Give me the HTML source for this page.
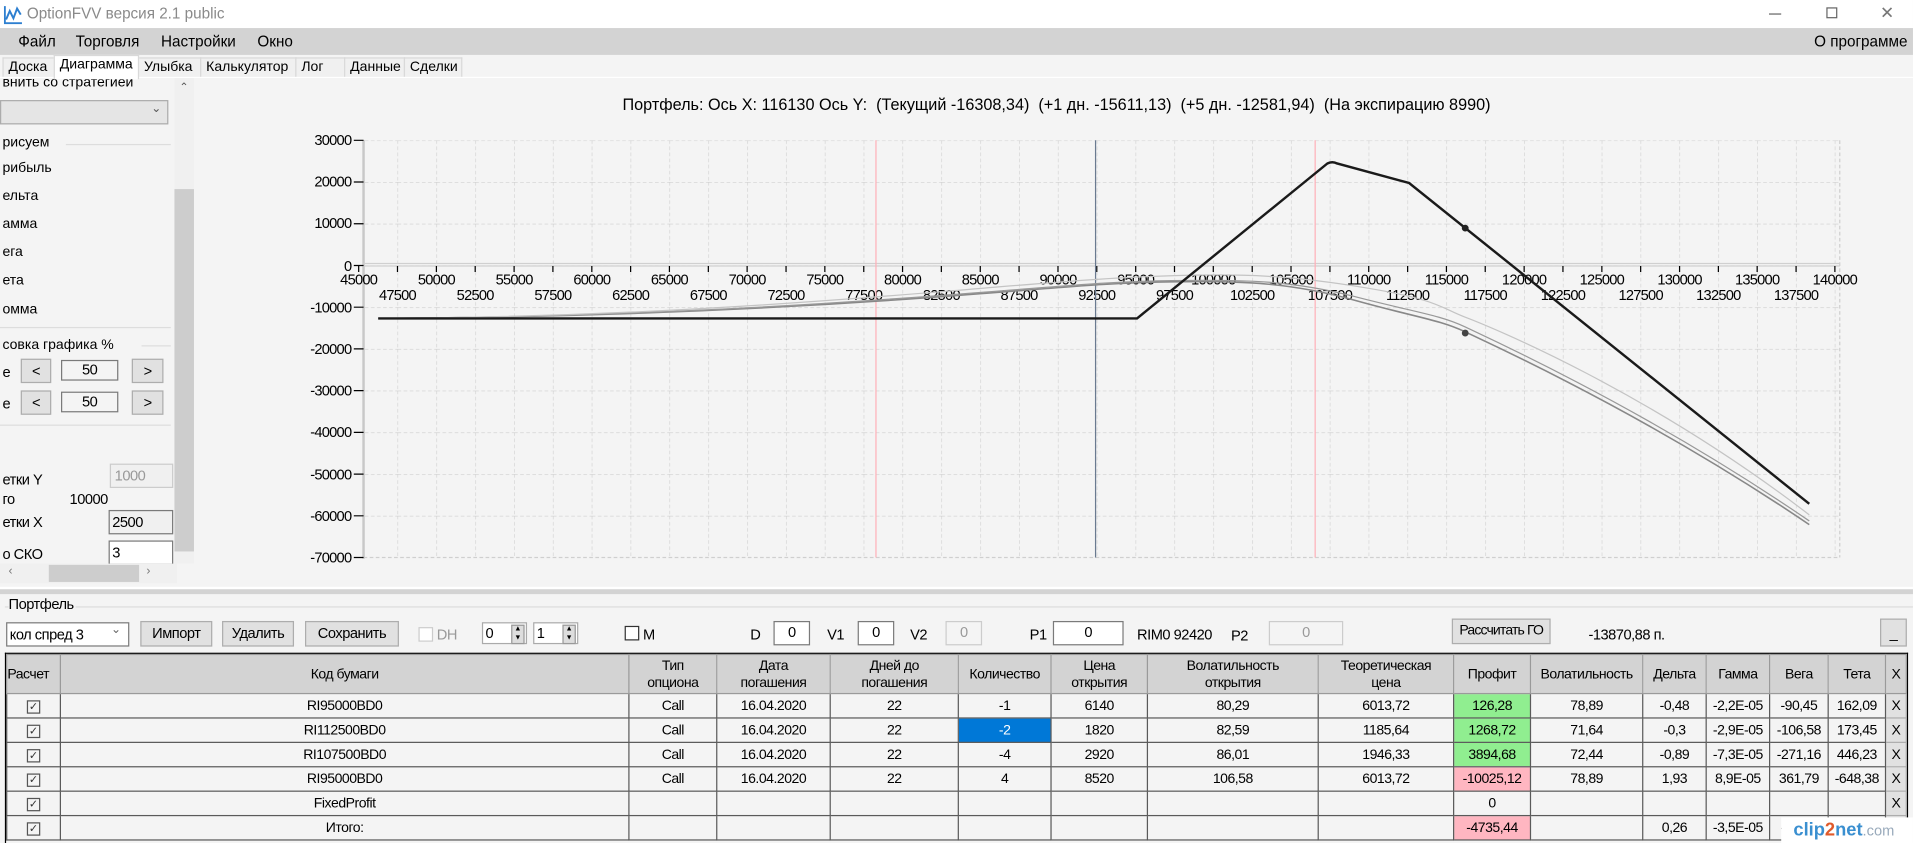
<!DOCTYPE html>
<html><head><meta charset="utf-8">
<style>
html,body{margin:0;padding:0;width:1913px;height:843px;overflow:hidden;background:#f4f4f4;}
#w{position:absolute;left:0;top:0;width:1568px;height:691px;transform:scale(1.22);transform-origin:0 0;background:#f4f4f4;font-family:"Liberation Sans",sans-serif;font-size:12px;color:#000;}
.a{position:absolute;white-space:nowrap;}
.n{letter-spacing:-0.4px;}
.btn{position:absolute;background:#e1e1e1;border:1px solid #adadad;box-sizing:border-box;text-align:center;letter-spacing:-0.4px;white-space:nowrap;overflow:hidden;}
.tb{position:absolute;background:#fff;border:1px solid #7a7a7a;box-sizing:border-box;text-align:center;letter-spacing:-0.4px;}
.tab{position:absolute;top:47px;height:16px;border:1px solid #d9d9d9;border-bottom:none;box-sizing:border-box;background:#f0f0f0;padding-left:4px;line-height:15px;font-size:11.5px;}
table{border-collapse:collapse;position:absolute;left:5px;top:536px;font-size:11.5px;letter-spacing:-0.4px;table-layout:fixed;}
td{border:1px solid #5a5a5a;text-align:center;padding:0;height:19px;background:#f4f4f4;overflow:hidden;white-space:nowrap;}
tr.h td{background:#d3d3d3;height:31px;line-height:14px;border-color:#9a9a9a;}
.g{background:#90ee90!important}.p{background:#ffb6c1!important}
.cb{display:inline-block;width:9px;height:9px;border:1px solid #555;font-size:9px;line-height:9px;color:#333;letter-spacing:0;}
.x{background:#e1e1e1!important;border:1px solid #adadad!important;}
</style></head><body><div id="w">
<div class="a" style="left:0;top:0;width:1568px;height:23px;background:#fff"></div>
<svg class="a" style="left:3px;top:4px" width="16" height="16" viewBox="0 0 16 16"><path d="M1 1V15H15" stroke="#2d7fd0" stroke-width="1.5" fill="none"/><path d="M2 12L5 5L8 11L11 3L14 8" stroke="#2d7fd0" stroke-width="1.6" fill="none"/></svg>
<div class="a" style="left:22px;top:4px;font-size:12.5px;color:#8a8a8a">OptionFVV версия 2.1 public</div>
<div class="a" style="left:1450px;top:11px;width:10px;height:1px;background:#666"></div>
<div class="a" style="left:1497px;top:6px;width:7px;height:7px;border:1px solid #666"></div>
<div class="a" style="left:1541px;top:2px;font-size:14px;color:#777">✕</div>
<div class="a" style="left:0;top:23px;width:1568px;height:22px;background:#d3d3d3"></div>
<div class="a" style="left:15px;top:27px;font-size:12.5px">Файл</div>
<div class="a" style="left:62px;top:27px;font-size:12.5px">Торговля</div>
<div class="a" style="left:132px;top:27px;font-size:12.5px">Настройки</div>
<div class="a" style="left:211px;top:27px;font-size:12.5px">Окно</div>
<div class="a" style="left:1487px;top:27px;font-size:12.5px">О программе</div>
<div class="tab" style="left:2px;width:43px">Доска</div>
<div class="tab" style="left:44px;top:45px;height:20px;width:70px;background:#fff;z-index:2">Диаграмма</div>
<div class="tab" style="left:113px;width:52px">Улыбка</div>
<div class="tab" style="left:164px;width:79px">Калькулятор</div>
<div class="tab" style="left:242px;width:41px">Лог</div>
<div class="tab" style="left:282px;width:50px">Данные</div>
<div class="tab" style="left:331px;width:48px">Сделки</div>
<div class="a" style="left:0;top:63px;width:1568px;height:1px;background:#fff"></div>
<div class="a" style="left:0;top:64px;width:143px;height:398px;background:#f4f4f4"></div>
<div class="a" style="left:2px;top:62px;font-size:11.5px">внить со стратегией</div>
<div class="a" style="left:0;top:82px;width:138px;height:20px;background:#e5e5e5;border:1px solid #acacac;box-sizing:border-box"></div>
<div class="a" style="left:124px;top:84px;font-size:10px;color:#555">⌄</div>
<div class="a" style="left:2px;top:111px;font-size:11.5px">рисуем</div>
<div class="a" style="left:54px;top:118px;width:86px;height:1px;background:#ddd"></div>
<div class="a" style="left:2px;top:132px;font-size:11.5px">рибыль</div>
<div class="a" style="left:2px;top:155px;font-size:11.5px">ельта</div>
<div class="a" style="left:2px;top:178px;font-size:11.5px">амма</div>
<div class="a" style="left:2px;top:201px;font-size:11.5px">ега</div>
<div class="a" style="left:2px;top:224px;font-size:11.5px">ета</div>
<div class="a" style="left:2px;top:248px;font-size:11.5px">омма</div>
<div class="a" style="left:0;top:268px;width:140px;height:1px;background:#ddd"></div>
<div class="a" style="left:2px;top:277px;font-size:11.5px">совка графика %</div>
<div class="a" style="left:116px;top:283px;width:24px;height:1px;background:#ddd"></div>
<div class="a n" style="left:2px;top:298px">е</div>
<div class="btn" style="left:17px;top:294px;width:25px;height:20px;line-height:18px">&lt;</div>
<div class="tb" style="left:50px;top:295px;width:47px;height:17px;line-height:15px;background:#f4f4f4">50</div>
<div class="btn" style="left:108px;top:294px;width:26px;height:20px;line-height:18px">&gt;</div>
<div class="a n" style="left:2px;top:324px">е</div>
<div class="btn" style="left:17px;top:320px;width:25px;height:20px;line-height:18px">&lt;</div>
<div class="tb" style="left:50px;top:321px;width:47px;height:17px;line-height:15px;background:#f4f4f4">50</div>
<div class="btn" style="left:108px;top:320px;width:26px;height:20px;line-height:18px">&gt;</div>
<div class="a" style="left:0;top:348px;width:140px;height:1px;background:#ddd"></div>
<div class="a n" style="left:2px;top:386px">етки Y</div>
<div class="tb" style="left:90px;top:380px;width:52px;height:20px;line-height:18px;text-align:left;padding-left:3px;color:#999;border-color:#ccc;background:#f0f0f0">1000</div>
<div class="a n" style="left:2px;top:402px">го</div>
<div class="a n" style="left:57px;top:402px">10000</div>
<div class="a n" style="left:2px;top:421px">етки X</div>
<div class="tb" style="left:89px;top:418px;width:53px;height:20px;line-height:18px;text-align:left;padding-left:2px;background:#f0f0f0">2500</div>
<div class="a n" style="left:2px;top:447px">о СКО</div>
<div class="tb" style="left:89px;top:443px;width:53px;height:20px;line-height:18px;text-align:left;padding-left:2px">3</div>
<div class="a" style="left:147px;top:446px;font-size:9px;color:#666">⌄</div>
<div class="a" style="left:143px;top:64px;width:16px;height:398px;background:#f0f0f0"></div>
<div class="a" style="left:143px;top:155px;width:16px;height:297px;background:#cdcdcd"></div>
<div class="a" style="left:147px;top:66px;font-size:9px;color:#555">⌃</div>
<div class="a" style="left:0;top:462px;width:145px;height:16px;background:#f0f0f0"></div>
<div class="a" style="left:40px;top:463px;width:74px;height:14px;background:#cdcdcd"></div>
<div class="a" style="left:7px;top:463px;font-size:10px;color:#777">‹</div>
<div class="a" style="left:120px;top:463px;font-size:10px;color:#777">›</div>
<div class="a" style="left:163px;top:64px;width:1405px;height:417px;background:#f4f4f4"></div>
<div class="a" style="left:466px;top:78px;width:800px;text-align:center;font-size:13.3px">Портфель: Ось X: 116130 Ось Y:&nbsp; (Текущий -16308,34)&nbsp; (+1 дн. -15611,13)&nbsp; (+5 дн. -12581,94)&nbsp; (На экспирацию 8990)</div>
<svg class="a" style="left:0;top:0" width="1568" height="481" font-family="Liberation Sans, sans-serif" font-size="12" letter-spacing="-0.6">
<defs><pattern id="gp" x="294" y="115" width="31.84" height="34.2" patternUnits="userSpaceOnUse"><path d="M0 0V34.2M0 0H31.84" stroke="#cfcfcf" stroke-width="1" stroke-dasharray="3,2" fill="none"/></pattern></defs>
<rect x="298" y="115" width="1210" height="342" fill="url(#gp)"/>
<line x1="1508" y1="115" x2="1508" y2="457" stroke="#cfcfcf" stroke-dasharray="3,2"/>
<line x1="298" y1="457" x2="1508" y2="457" stroke="#cfcfcf" stroke-dasharray="3,2"/>
<line x1="298" y1="115" x2="298" y2="458" stroke="#c8c8c8" stroke-width="2"/>
<line x1="298" y1="216" x2="1508" y2="216" stroke="#d0d0d0" stroke-width="1"/>
<line x1="298" y1="218" x2="1508" y2="218" stroke="#d0d0d0" stroke-width="1"/>
<g stroke="#000"><path d="M290 115H298M290 149.2H298M290 183.4H298M290 217.6H298M290 251.8H298M290 286H298M290 320.2H298M290 354.4H298M290 388.6H298M290 422.8H298M290 457H298"/>
<path d="M294 218v5M325.8 218v5M357.7 218v5M389.5 218v5M421.4 218v5M453.2 218v5M485.1 218v5M516.9 218v5M548.7 218v5M580.6 218v5M612.4 218v5M644.3 218v5M676.1 218v5M708 218v5M739.8 218v5M771.6 218v5M803.5 218v5M835.3 218v5M867.2 218v5M899 218v5M930.9 218v5M962.7 218v5M994.5 218v5M1026.4 218v5M1058.2 218v5M1090.1 218v5M1121.9 218v5M1153.8 218v5M1185.6 218v5M1217.4 218v5M1249.3 218v5M1281.1 218v5M1313 218v5M1344.8 218v5M1376.7 218v5M1408.5 218v5M1440.3 218v5M1472.2 218v5M1504 218v5"/></g>
<g text-anchor="end"><text x="288" y="119">30000</text><text x="288" y="153">20000</text><text x="288" y="187">10000</text><text x="288" y="222">0</text><text x="288" y="256">-10000</text><text x="288" y="290">-20000</text><text x="288" y="324">-30000</text><text x="288" y="358">-40000</text><text x="288" y="393">-50000</text><text x="288" y="427">-60000</text><text x="288" y="461">-70000</text></g>
<g text-anchor="middle"><text x="294" y="233">45000</text><text x="357.7" y="233">50000</text><text x="421.4" y="233">55000</text><text x="485.1" y="233">60000</text><text x="548.7" y="233">65000</text><text x="612.4" y="233">70000</text><text x="676.1" y="233">75000</text><text x="739.8" y="233">80000</text><text x="803.5" y="233">85000</text><text x="867.2" y="233">90000</text><text x="930.9" y="233">95000</text><text x="994.5" y="233">100000</text><text x="1058.2" y="233">105000</text><text x="1121.9" y="233">110000</text><text x="1185.6" y="233">115000</text><text x="1249.3" y="233">120000</text><text x="1313" y="233">125000</text><text x="1376.7" y="233">130000</text><text x="1440.3" y="233">135000</text><text x="1504" y="233">140000</text>
<text x="325.8" y="246">47500</text><text x="389.5" y="246">52500</text><text x="453.2" y="246">57500</text><text x="516.9" y="246">62500</text><text x="580.6" y="246">67500</text><text x="644.3" y="246">72500</text><text x="708" y="246">77500</text><text x="771.6" y="246">82500</text><text x="835.3" y="246">87500</text><text x="899" y="246">92500</text><text x="962.7" y="246">97500</text><text x="1026.4" y="246">102500</text><text x="1090.1" y="246">107500</text><text x="1153.8" y="246">112500</text><text x="1217.4" y="246">117500</text><text x="1281.1" y="246">122500</text><text x="1344.8" y="246">127500</text><text x="1408.5" y="246">132500</text><text x="1472.2" y="246">137500</text></g>
<line x1="718" y1="115" x2="718" y2="457" stroke="#ffb0b8"/>
<line x1="1078" y1="115" x2="1078" y2="457" stroke="#ffb0b8"/>
<line x1="898" y1="115" x2="898" y2="457" stroke="#6a7a90"/>
<path d="M310 261C500 260 650 252 760 244S900 232 960 231S1060 232 1110 246S1180 262 1201 272S1350 340 1483 430" stroke="#888" stroke-width="1.3" fill="none"/>
<path d="M310 261C500 260 650 251 760 243S900 231 960 230S1060 230 1110 243S1180 258 1201 268S1350 336 1483 427" stroke="#999" stroke-width="1" fill="none"/>
<path d="M310 261C500 260 650 249 760 240S900 228 960 226S1060 226 1120 236S1180 252 1201 260S1350 320 1483 422" stroke="#c4c4c4" stroke-width="1" fill="none"/>
<path d="M310 261H932L1088 134Q1092 132 1096 134L1155 150L1483 413" stroke="#1a1a1a" stroke-width="2" fill="none"/>
<circle cx="1201" cy="187" r="2.8" fill="#222"/>
<circle cx="1201" cy="273" r="2.8" fill="#444"/>
</svg>
<div class="a" style="left:0;top:481px;width:1568px;height:2px;background:#fff"></div>
<div class="a" style="left:0;top:483px;width:1568px;height:4px;background:#d3d3d3"></div>
<div class="a" style="left:4px;top:497px;width:1564px;height:1px;background:#ddd"></div>
<div class="a n" style="left:7px;top:488px;background:#f4f4f4;padding-right:2px">Портфель</div>
<div class="tb" style="left:5px;top:510px;width:101px;height:20px;line-height:18px;text-align:left;padding-left:2px">кол спред 3</div>
<div class="a" style="left:91px;top:511px;font-size:10px;color:#666">⌄</div>
<div class="btn" style="left:115px;top:509px;width:59px;height:21px;line-height:19px">Импорт</div>
<div class="btn" style="left:182px;top:509px;width:59px;height:21px;line-height:19px">Удалить</div>
<div class="btn" style="left:250px;top:509px;width:77px;height:21px;line-height:19px">Сохранить</div>
<div class="a" style="left:343px;top:514px;width:10px;height:10px;border:1px solid #ccc;background:#fff"></div>
<div class="a n" style="left:358px;top:513px;color:#999">DH</div>
<div class="tb" style="left:395px;top:510px;width:37px;height:18px;line-height:16px;text-align:left;padding-left:2px;border-color:#aaa">0</div>
<div class="a" style="left:419px;top:512px;width:9px;height:14px;background:#ddd;border:1px solid #999;font-size:6px;line-height:7px;text-align:center">▲<br>▼</div>
<div class="tb" style="left:437px;top:510px;width:37px;height:18px;line-height:16px;text-align:left;padding-left:2px;border-color:#aaa">1</div>
<div class="a" style="left:461px;top:512px;width:9px;height:14px;background:#ddd;border:1px solid #999;font-size:6px;line-height:7px;text-align:center">▲<br>▼</div>
<div class="a" style="left:512px;top:513px;width:10px;height:10px;border:1px solid #333;background:#fff"></div>
<div class="a n" style="left:527px;top:513px">M</div>
<div class="a n" style="left:615px;top:513px">D</div>
<div class="tb" style="left:634px;top:509px;width:30px;height:20px;line-height:17px">0</div>
<div class="a n" style="left:678px;top:513px">V1</div>
<div class="tb" style="left:703px;top:509px;width:30px;height:20px;line-height:17px">0</div>
<div class="a n" style="left:746px;top:513px">V2</div>
<div class="tb" style="left:775px;top:509px;width:30px;height:20px;line-height:17px;color:#999;border-color:#ccc;background:#f4f4f4">0</div>
<div class="a n" style="left:844px;top:513px">P1</div>
<div class="tb" style="left:863px;top:509px;width:58px;height:20px;line-height:17px">0</div>
<div class="a n" style="left:932px;top:513px">RIM0 92420</div>
<div class="a n" style="left:1009px;top:514px">P2</div>
<div class="tb" style="left:1040px;top:509px;width:61px;height:20px;line-height:17px;color:#999;border-color:#ccc;background:#f4f4f4">0</div>
<div class="btn" style="left:1190px;top:507px;width:81px;height:21px;line-height:19px;font-size:11.5px;letter-spacing:-0.7px">Рассчитать ГО</div>
<div class="a n" style="left:1302px;top:513px">-13870,88 п.</div>
<div class="btn" style="left:1541px;top:507px;width:22px;height:23px;line-height:22px">_</div>
<div class="a" style="left:4px;top:535px;width:1560px;height:156px;border:1px solid #000;border-bottom:none;box-sizing:border-box"></div>
<table>
<colgroup><col style="width:44px"><col style="width:466px"><col style="width:72px"><col style="width:93px"><col style="width:105px"><col style="width:76px"><col style="width:79px"><col style="width:140px"><col style="width:111px"><col style="width:63px"><col style="width:92px"><col style="width:52px"><col style="width:52px"><col style="width:48px"><col style="width:47px"><col style="width:17px"></colgroup>
<tr class="h"><td style="text-align:left">Расчет</td><td>Код бумаги</td><td>Тип<br>опциона</td><td>Дата<br>погашения</td><td>Дней до<br>погашения</td><td>Количество</td><td>Цена<br>открытия</td><td>Волатильность<br>открытия</td><td>Теоретическая<br>цена</td><td>Профит</td><td>Волатильность</td><td>Дельта</td><td>Гамма</td><td>Вега</td><td>Тета</td><td>X</td></tr>
<tr><td><span class="cb">✓</span></td><td>RI95000BD0</td><td>Call</td><td>16.04.2020</td><td>22</td><td>-1</td><td>6140</td><td>80,29</td><td>6013,72</td><td class="g">126,28</td><td>78,89</td><td>-0,48</td><td>-2,2E-05</td><td>-90,45</td><td>162,09</td><td class="x">X</td></tr>
<tr><td><span class="cb">✓</span></td><td>RI112500BD0</td><td>Call</td><td>16.04.2020</td><td>22</td><td style="background:#0078d7;color:#fff">-2</td><td>1820</td><td>82,59</td><td>1185,64</td><td class="g">1268,72</td><td>71,64</td><td>-0,3</td><td>-2,9E-05</td><td>-106,58</td><td>173,45</td><td class="x">X</td></tr>
<tr><td><span class="cb">✓</span></td><td>RI107500BD0</td><td>Call</td><td>16.04.2020</td><td>22</td><td>-4</td><td>2920</td><td>86,01</td><td>1946,33</td><td class="g">3894,68</td><td>72,44</td><td>-0,89</td><td>-7,3E-05</td><td>-271,16</td><td>446,23</td><td class="x">X</td></tr>
<tr><td><span class="cb">✓</span></td><td>RI95000BD0</td><td>Call</td><td>16.04.2020</td><td>22</td><td>4</td><td>8520</td><td>106,58</td><td>6013,72</td><td class="p">-10025,12</td><td>78,89</td><td>1,93</td><td>8,9E-05</td><td>361,79</td><td>-648,38</td><td class="x">X</td></tr>
<tr><td><span class="cb">✓</span></td><td>FixedProfit</td><td></td><td></td><td></td><td></td><td></td><td></td><td></td><td>0</td><td></td><td></td><td></td><td></td><td></td><td class="x">X</td></tr>
<tr><td><span class="cb">✓</span></td><td>Итого:</td><td></td><td></td><td></td><td></td><td></td><td></td><td></td><td class="p">-4735,44</td><td></td><td>0,26</td><td>-3,5E-05</td><td>-109,4</td><td>133,39</td><td class="x">X</td></tr>
</table>
<div class="a" style="left:1460px;top:670px;width:108px;height:21px;background:#fff"></div>
<div class="a" style="left:1470px;top:672px;font-size:15px;color:#3a8fd0;font-weight:bold">clip<span style="color:#e05a2a">2</span>net<span style="font-weight:normal;font-size:12px;color:#9ab">.com</span></div>
</div></body></html>
